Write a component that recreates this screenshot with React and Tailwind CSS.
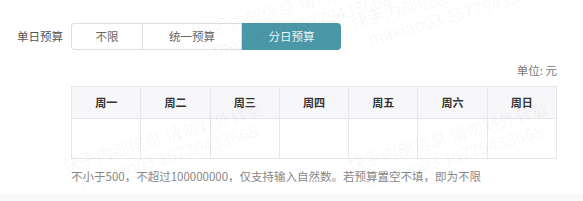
import React from 'react';

const days = ['周一', '周二', '周三', '周四', '周五', '周六', '周日'];

function Watermark({ className }) {
    return (
        <div className={`pointer-events-none absolute -rotate-[16deg] text-center leading-[20px] text-[17px] text-black/[0.045] whitespace-nowrap ${className}`}>
            <div>快手内部信息 请勿对外转载</div>
            <div>maxiao03 15779433668</div>
        </div>
    );
}

export default function App() {
    return (
        <div
            className="relative w-[583px] h-[201px] overflow-hidden bg-white"
            style={{ fontFamily: '"Noto Sans CJK SC", "Liberation Sans", sans-serif' }}
        >
            <div className="pt-[23px] pr-[26px]">
                {/* Budget type */}
                <div className="flex items-center">
                    <span className="w-[71px] pl-[17px] text-[11.5px] text-[#555]">单日预算</span>
                    <div className="flex h-[27px] text-[11.5px]">
                        <button className="w-[72px] border border-[#dcdde2] rounded-l-[3px] text-[#666] bg-white">不限</button>
                        <button className="w-[99px] border border-l-0 border-[#dcdde2] text-[#666] bg-white">统一预算</button>
                        <button className="w-[99px] rounded-r-[4px] bg-[#4a97a8] text-white/90">分日预算</button>
                    </div>
                </div>

                <div className="mt-[13px] text-right text-[11.5px] text-[#777] leading-[14px]">单位: 元</div>

                {/* Daily table */}
                <div className="ml-[71px] mt-[9px]">
                    <table className="w-[486px] table-fixed border-collapse border-[1.5px] border-[#e6e6ec]">
                        <thead>
                            <tr className="h-[32px] bg-[#f7f7f9]">
                                {days.map((d) => (
                                    <th key={d} className="border-[1.5px] border-[#e6e6ec] text-[11px] font-bold text-[#333]">{d}</th>
                                ))}
                            </tr>
                        </thead>
                        <tbody>
                            <tr className="h-[40px]">
                                {days.map((d) => (
                                    <td key={d} className="border-[1.5px] border-[#e6e6ec]"></td>
                                ))}
                            </tr>
                        </tbody>
                    </table>
                    <p className="mt-[9px] text-[11.5px] leading-[16px] text-[#888] whitespace-nowrap">
                        不小于500，不超过100000000，仅支持输入自然数。若预算置空不填，即为不限
                    </p>
                </div>
            </div>

            {/* bottom band */}
            <div className="absolute left-0 right-0 bottom-0 h-[8px] bg-[#fafafa]"></div>

            <Watermark className="left-[195px] top-[-6px]" />
            <Watermark className="left-[350px] top-[-16px]" />
            <Watermark className="left-[62px] top-[126px]" />
            <Watermark className="left-[347px] top-[126px]" />
        </div>
    );
}
